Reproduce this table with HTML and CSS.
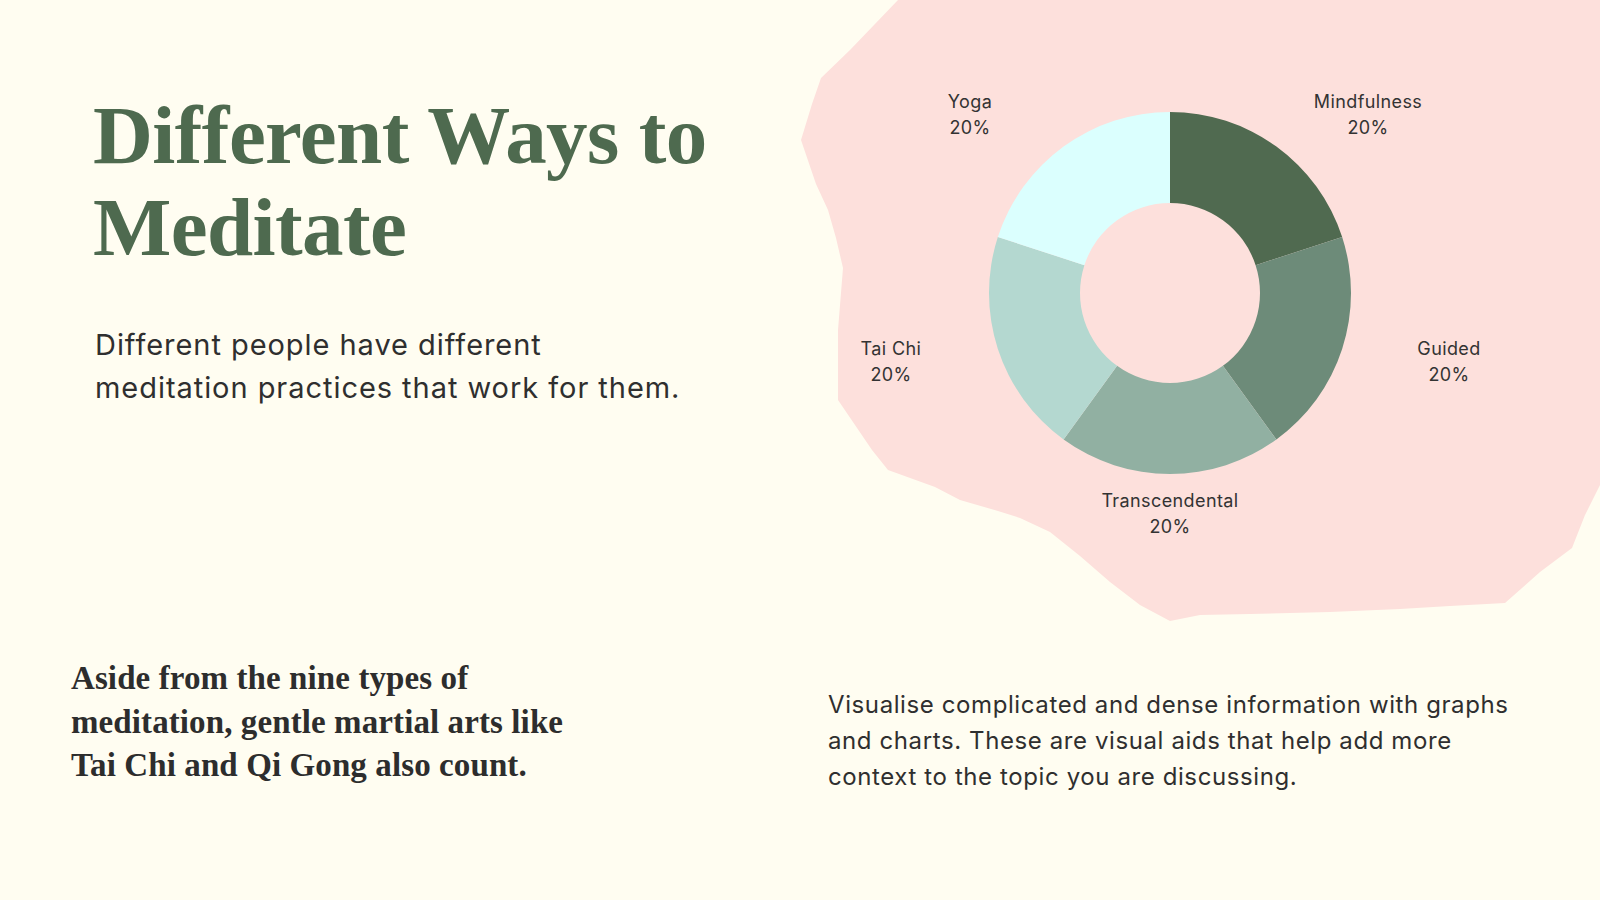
FILE: index.html
```html
<!DOCTYPE html>
<html lang="en">
<head>
<meta charset="utf-8">
<title>Different Ways to Meditate</title>
<link rel="stylesheet" href="styles.css">
</head>
<body>
<main class="slide">
  <section class="intro">
    <h1 class="title">Different Ways to<br>Meditate</h1>
    <p class="lead">Different people have different<br>meditation practices that work for them.</p>
  </section>

  <section class="chart">
    <svg class="chart-svg" viewBox="780 0 820 620" width="820" height="620" aria-label="Meditation types donut chart">
      <path class="blob" d="M 898 0 L 1600 0 L 1600 485 L 1585 515 L 1572 548 L 1540 572 L 1505 603 L 1450 606 L 1400 609 L 1330 612 L 1250 614 L 1200 615 L 1170 621 L 1140 605 L 1110 582 L 1080 556 L 1050 532 L 1020 518 L 998 511 L 960 500 L 935 487 L 888 470 L 872 450 L 838 400 L 838 330 L 843 268 L 836 238 L 828 210 L 816 184 L 801 140 L 812 104 L 821 78 L 850 50 Z"/>
      <path class="seg seg-1" d="M 1170 112 A 181 181 0 0 1 1342.15 237.07 L 1255.6 265.19 A 90 90 0 0 0 1170 203 Z"/>
      <path class="seg seg-2" d="M 1342.15 237.07 A 181 181 0 0 1 1276.39 439.43 L 1222.9 365.81 A 90 90 0 0 0 1255.6 265.19 Z"/>
      <path class="seg seg-3" d="M 1276.39 439.43 A 181 181 0 0 1 1063.61 439.43 L 1117.1 365.81 A 90 90 0 0 0 1222.9 365.81 Z"/>
      <path class="seg seg-4" d="M 1063.61 439.43 A 181 181 0 0 1 997.85 237.07 L 1084.4 265.19 A 90 90 0 0 0 1117.1 365.81 Z"/>
      <path class="seg seg-5" d="M 997.85 237.07 A 181 181 0 0 1 1170 112 L 1170 203 A 90 90 0 0 0 1084.4 265.19 Z"/>

      <text class="label" x="1368" y="108">Mindfulness</text>
      <text class="label" x="1368" y="134">20%</text>
      <text class="label" x="1449" y="355">Guided</text>
      <text class="label" x="1449" y="381">20%</text>
      <text class="label" x="1170" y="507">Transcendental</text>
      <text class="label" x="1170" y="533">20%</text>
      <text class="label" x="891" y="355">Tai Chi</text>
      <text class="label" x="891" y="381">20%</text>
      <text class="label" x="970" y="108">Yoga</text>
      <text class="label" x="970" y="134">20%</text>
    </svg>
  </section>

  <section class="note">
    <p class="note-text">Aside from the nine types of<br>meditation, gentle martial arts like<br>Tai Chi and Qi Gong also count.</p>
  </section>

  <section class="caption">
    <p class="caption-text">Visualise complicated and dense information with graphs<br>and charts. These are visual aids that help add more<br>context to the topic you are discussing.</p>
  </section>
</main>
</body>
</html>
```

FILE: styles.css
```css
html, body {
  margin: 0;
  padding: 0;
  background: #fffdf1;
}

body {
  width: 1600px;
  height: 900px;
  overflow: hidden;
  font-family: "Inter", "Liberation Sans", sans-serif;
  color: #2f2f2f;
}

.slide {
  width: 1600px;
  height: 900px;
  display: grid;
  grid-template-columns: 780px 820px;
  grid-template-rows: 620px 280px;
}

.intro {
  padding: 89px 0 0 93px;
}

.title {
  margin: 0;
  font-family: "Liberation Serif", "Times New Roman", serif;
  font-weight: 700;
  font-size: 83px;
  line-height: 92px;
  letter-spacing: -0.6px;
  color: #4e6a4f;
}

.lead {
  margin: 50px 0 0 2px;
  font-size: 29px;
  line-height: 43px;
  letter-spacing: 0.95px;
  color: #2f2f2f;
}

.chart {
  position: relative;
}

.chart-svg {
  display: block;
  overflow: visible;
}

.blob {
  fill: #fde0dc;
}

.seg-1 { fill: #506a50; }
.seg-2 { fill: #6d8b79; }
.seg-3 { fill: #91b0a2; }
.seg-4 { fill: #b4d8d0; }
.seg-5 { fill: #dbfffe; }

.label {
  font-family: "Inter", "Liberation Sans", sans-serif;
  font-size: 18px;
  letter-spacing: 0.4px;
  fill: #333333;
  text-anchor: middle;
}

.note {
  padding: 37px 0 0 71px;
}

.note-text {
  margin: 0;
  font-family: "Liberation Serif", "Times New Roman", serif;
  font-weight: 700;
  font-size: 33px;
  line-height: 43.5px;
  letter-spacing: 0.1px;
  color: #2d2d2d;
}

.caption {
  padding: 67px 0 0 48px;
}

.caption-text {
  margin: 0;
  font-size: 24px;
  line-height: 36px;
  letter-spacing: 0.6px;
  color: #2f2f2f;
}
```
